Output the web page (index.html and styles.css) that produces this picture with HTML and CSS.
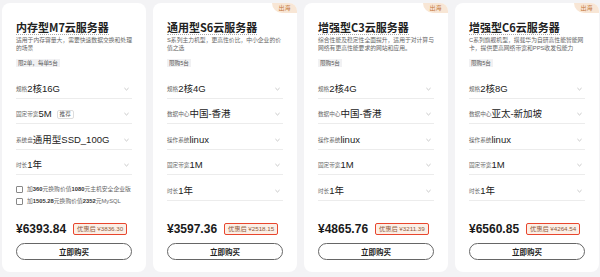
FILE: index.html
```html
<!DOCTYPE html>
<html lang="zh-CN">
<head>
  <meta charset="UTF-8">
  <title>云服务器</title>
  <link rel="stylesheet" href="styles.css">
</head>
<body>
  <div class="cards">

    <div class="card">
      <div class="title"><span>内存型M7云服务器</span></div>
      <p class="desc">适用于内存容量大，需要快速数据交换和处理的场景</p>
      <span class="limit">限2单，每单5台</span>
      <div class="rows">
        <div class="row"><span class="label">规格</span><span class="value">2核16G</span><svg class="arrow" viewBox="0 0 6 4"><polyline points="0.5,0.8 3,3.2 5.5,0.8"/></svg></div>
        <div class="row"><span class="label">固定带宽</span><span class="value">5M</span><span class="hot">推荐</span><svg class="arrow" viewBox="0 0 6 4"><polyline points="0.5,0.8 3,3.2 5.5,0.8"/></svg></div>
        <div class="row"><span class="label">系统盘</span><span class="value">通用型SSD_100G</span><svg class="arrow" viewBox="0 0 6 4"><polyline points="0.5,0.8 3,3.2 5.5,0.8"/></svg></div>
        <div class="row"><span class="label">时长</span><span class="value">1年</span><svg class="arrow" viewBox="0 0 6 4"><polyline points="0.5,0.8 3,3.2 5.5,0.8"/></svg></div>
      </div>
      <div class="extras">
        <label class="extra"><span class="box"></span>加<b>360</b>元换购价值<b>1080</b>元主机安全企业版</label>
        <label class="extra"><span class="box"></span>加<b>1505.28</b>元换购价值<b>2352</b>元MySQL</label>
      </div>
      <div class="bottom">
        <div class="price-line"><span class="price">¥6393.84</span><span class="deal">优惠后 ¥3836.30</span></div>
        <button>立即购买</button>
      </div>
    </div>

    <div class="card">
      <span class="badge">出海</span>
      <div class="title"><span>通用型S6云服务器</span></div>
      <p class="desc">S系列主力机型，更高性价比，中小企业的价值之选</p>
      <span class="limit">限购5台</span>
      <div class="rows">
        <div class="row"><span class="label">规格</span><span class="value">2核4G</span><svg class="arrow" viewBox="0 0 6 4"><polyline points="0.5,0.8 3,3.2 5.5,0.8"/></svg></div>
        <div class="row"><span class="label">数据中心</span><span class="value">中国-香港</span><svg class="arrow" viewBox="0 0 6 4"><polyline points="0.5,0.8 3,3.2 5.5,0.8"/></svg></div>
        <div class="row"><span class="label">操作系统</span><span class="value">linux</span><svg class="arrow" viewBox="0 0 6 4"><polyline points="0.5,0.8 3,3.2 5.5,0.8"/></svg></div>
        <div class="row"><span class="label">固定带宽</span><span class="value">1M</span><svg class="arrow" viewBox="0 0 6 4"><polyline points="0.5,0.8 3,3.2 5.5,0.8"/></svg></div>
        <div class="row"><span class="label">时长</span><span class="value">1年</span><svg class="arrow" viewBox="0 0 6 4"><polyline points="0.5,0.8 3,3.2 5.5,0.8"/></svg></div>
      </div>
      <div class="bottom">
        <div class="price-line"><span class="price">¥3597.36</span><span class="deal">优惠后 ¥2518.15</span></div>
        <button>立即购买</button>
      </div>
    </div>

    <div class="card">
      <span class="badge">出海</span>
      <div class="title"><span>增强型C3云服务器</span></div>
      <p class="desc">综合性能及稳定性全面提升，适用于对计算与网络有更高性能要求的网站和应用。</p>
      <span class="limit">限购5台</span>
      <div class="rows">
        <div class="row"><span class="label">规格</span><span class="value">2核4G</span><svg class="arrow" viewBox="0 0 6 4"><polyline points="0.5,0.8 3,3.2 5.5,0.8"/></svg></div>
        <div class="row"><span class="label">数据中心</span><span class="value">中国-香港</span><svg class="arrow" viewBox="0 0 6 4"><polyline points="0.5,0.8 3,3.2 5.5,0.8"/></svg></div>
        <div class="row"><span class="label">操作系统</span><span class="value">linux</span><svg class="arrow" viewBox="0 0 6 4"><polyline points="0.5,0.8 3,3.2 5.5,0.8"/></svg></div>
        <div class="row"><span class="label">固定带宽</span><span class="value">1M</span><svg class="arrow" viewBox="0 0 6 4"><polyline points="0.5,0.8 3,3.2 5.5,0.8"/></svg></div>
        <div class="row"><span class="label">时长</span><span class="value">1年</span><svg class="arrow" viewBox="0 0 6 4"><polyline points="0.5,0.8 3,3.2 5.5,0.8"/></svg></div>
      </div>
      <div class="bottom">
        <div class="price-line"><span class="price">¥4865.76</span><span class="deal">优惠后 ¥3211.39</span></div>
        <button>立即购买</button>
      </div>
    </div>

    <div class="card">
      <span class="badge">出海</span>
      <div class="title"><span>增强型C6云服务器</span></div>
      <p class="desc">C系列旗舰机型，搭载华为自研高性能智能网卡，提供更高网络带宽和PPS收发包能力</p>
      <span class="limit">限购5台</span>
      <div class="rows">
        <div class="row"><span class="label">规格</span><span class="value">2核8G</span><svg class="arrow" viewBox="0 0 6 4"><polyline points="0.5,0.8 3,3.2 5.5,0.8"/></svg></div>
        <div class="row"><span class="label">数据中心</span><span class="value">亚太-新加坡</span><svg class="arrow" viewBox="0 0 6 4"><polyline points="0.5,0.8 3,3.2 5.5,0.8"/></svg></div>
        <div class="row"><span class="label">操作系统</span><span class="value">linux</span><svg class="arrow" viewBox="0 0 6 4"><polyline points="0.5,0.8 3,3.2 5.5,0.8"/></svg></div>
        <div class="row"><span class="label">固定带宽</span><span class="value">1M</span><svg class="arrow" viewBox="0 0 6 4"><polyline points="0.5,0.8 3,3.2 5.5,0.8"/></svg></div>
        <div class="row"><span class="label">时长</span><span class="value">1年</span><svg class="arrow" viewBox="0 0 6 4"><polyline points="0.5,0.8 3,3.2 5.5,0.8"/></svg></div>
      </div>
      <div class="bottom">
        <div class="price-line"><span class="price">¥6560.85</span><span class="deal">优惠后 ¥4264.54</span></div>
        <button>立即购买</button>
      </div>
    </div>

  </div>
</body>
</html>
```

FILE: styles.css
```css
body {
  margin: 0;
  padding: 3px 1px 5px 2px;
  background: #f3f3f5;
  font-family: "Liberation Sans", "Noto Sans CJK SC", sans-serif;
  color: #222;
}
.cards {
  display: flex;
  gap: 7px;
  height: 269px;
}
.card {
  flex: 1;
  position: relative;
  background: #fff;
  border-radius: 8px;
  padding: 15px 14px 12px;
  display: flex;
  flex-direction: column;
  align-items: flex-start;
  min-width: 0;
}
.badge {
  position: absolute;
  top: 0;
  right: 0;
  width: 25px;
  height: 10px;
  line-height: 10px;
  text-align: center;
  font-size: 6px;
  color: #c4783d;
  background: #f8e6d5;
  border-radius: 0 8px 0 10px;
}
.title span {
  display: inline-block;
  font-size: 11px;
  font-weight: bold;
  line-height: 12px;
  border-bottom: 1px dotted #aaa;
  padding-bottom: 0.5px;
  font-family: "Noto Sans CJK SC", sans-serif;
}
.desc {
  margin: 1px 0 0;
  font-size: 5.8px;
  line-height: 7.5px;
  color: #666;
}
.limit {
  margin-top: 7px;
  font-size: 5.6px;
  line-height: 8px;
  padding: 0 2px;
  background: #f1f1f3;
  color: #555;
}
.rows {
  width: 100%;
  margin-top: 6px;
}
.row {
  display: flex;
  align-items: center;
  padding: 10.5px 0 4px;
  border-bottom: 1px solid #ececec;
  line-height: 10px;
}
.label {
  font-size: 5.6px;
  color: #666;
}
.value {
  font-size: 9.5px;
  color: #222;
}
.hot {
  margin-left: 5px;
  font-size: 5.6px;
  line-height: 7px;
  padding: 0 2px;
  border: 1px solid #ddd;
  border-radius: 2px;
  color: #555;
}
.arrow {
  margin-left: auto;
  margin-right: 3px;
  width: 5px;
  height: 4px;
  fill: none;
  stroke: #aaa;
  stroke-width: 0.8;
}
.extras {
  margin-top: 11px;
  display: flex;
  flex-direction: column;
  gap: 5px;
}
.extra {
  display: flex;
  align-items: center;
  font-size: 5.8px;
  line-height: 7px;
  color: #666;
}
.extra b {
  color: #333;
}
.box {
  width: 5px;
  height: 5px;
  border: 0.8px solid #888;
  border-radius: 1px;
  margin-right: 4px;
}
.bottom {
  margin-top: auto;
  width: 100%;
}
.price-line {
  display: flex;
  align-items: center;
  gap: 7px;
  height: 12px;
}
.price {
  font-size: 12px;
  font-weight: bold;
  color: #1a1a1a;
}
.deal {
  font-size: 6.2px;
  line-height: 10px;
  padding: 0 3px;
  border: 1px solid #e8462e;
  border-radius: 2px;
  background: #fcefe6;
  color: #8c5a3c;
}
button {
  display: block;
  width: 100%;
  height: 17px;
  margin-top: 8px;
  background: #fff;
  border: 1px solid #666;
  border-radius: 9px;
  font-family: "Noto Sans CJK SC", sans-serif;
  font-size: 7.5px;
  font-weight: bold;
  color: #222;
  cursor: pointer;
}
```
